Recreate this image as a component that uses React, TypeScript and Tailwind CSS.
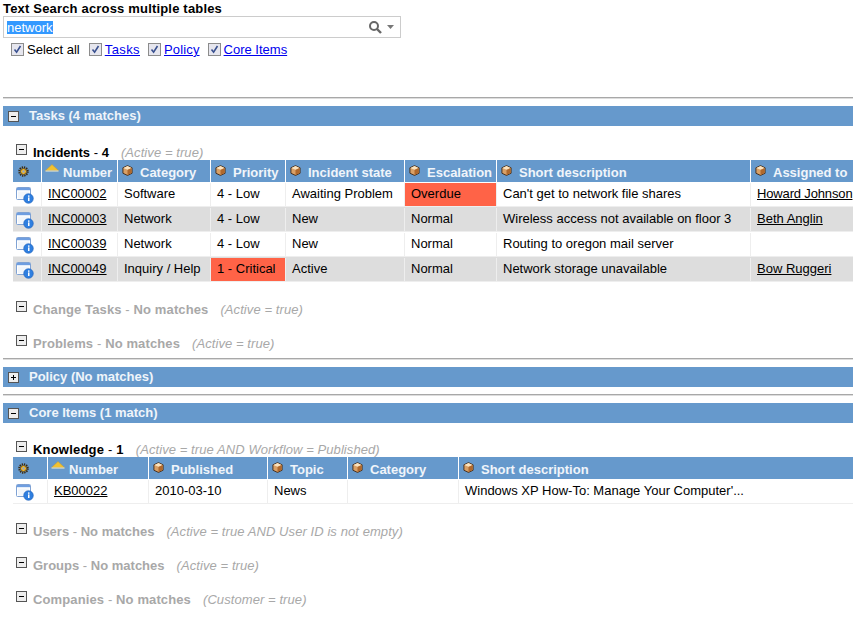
import React from "react";

const Cube = () => (
  <svg width="11" height="11" viewBox="0 0 12 12" className="absolute left-[4px] top-[5px]">
    <path d="M6 .7 11 3v6l-5 2.4L1 9V3z" fill="#d9a066" stroke="#3f2a18" strokeWidth="1" />
    <path d="M1.5 3.2 6 5.3l4.5-2.1L6 1.2z" fill="#fbe3bf" />
    <path d="M6 5.4V11l4.5-2.2V3.4z" fill="#b0682c" />
  </svg>
);
const Sort = () => (
  <svg width="14" height="8" viewBox="0 0 14 8" className="absolute left-[3px] top-[4px]">
    <path d="M7 .5 13.5 6.5H.5z" fill="#f2c230" stroke="#b89a4a" strokeWidth=".6" />
    <path d="M.5 7h13" stroke="#f5f0d0" strokeWidth="1" />
  </svg>
);
const Gear = () => (
  <svg width="11" height="11" viewBox="0 0 12 12" className="absolute left-[5px] top-[6px]">
    <circle cx="6" cy="6" r="4.6" fill="none" stroke="#3b2a10" strokeWidth="2.2" strokeDasharray="1.4 1" />
    <circle cx="6" cy="6" r="3.3" fill="#f0b429" stroke="#4a3510" strokeWidth=".8" />
    <circle cx="6" cy="6" r="1.3" fill="#8fa9cc" />
  </svg>
);
const Info = () => (
  <svg width="18" height="17" viewBox="0 0 18 17" className="block">
    <rect x=".5" y=".5" width="14" height="12" rx="1" fill="#fff" stroke="#7fa2d4" />
    <rect x="1" y="1" width="13" height="2.2" fill="#6f9ee0" />
    <rect x="2" y="4.5" width="11" height="7" fill="#f2f6fb" />
    <circle cx="12.5" cy="11.5" r="4.8" fill="#2f7fe0" stroke="#1f5fb8" strokeWidth=".6" />
    <rect x="12" y="8.4" width="1.5" height="1.4" fill="#fff" />
    <rect x="12" y="10.4" width="1.5" height="3.6" fill="#fff" />
  </svg>
);
const Toggle = ({ plus = false }: { plus?: boolean }) => (
  <span className="inline-flex items-center justify-center relative w-[11px] h-[11px] shrink-0 border border-[#555] bg-[#eeeeee]">
    <span className="w-[5px] h-px bg-black" />
    {plus && <span className="absolute w-px h-[5px] bg-black" />}
  </span>
);
const Check = () => (
  <span className="inline-flex items-center justify-center w-[13px] h-[13px] border border-[#8c8c8c] bg-[#e6e6ee] shrink-0">
    <svg width="9" height="9" viewBox="0 0 9 9"><path d="M1.5 4.5 3.6 7.2 7.5 1" fill="none" stroke="#39508f" strokeWidth="1.6" /></svg>
  </span>
);

const Bar = ({ title, plus = false, mt }: { title: string; plus?: boolean; mt: string }) => (
  <div className={`ml-[3px] h-5 bg-[#6699cc] flex items-center pl-[5px] gap-[10px] ${mt}`}>
    <Toggle plus={plus} />
    <span className="font-bold text-white/90 text-[13px]">{title}</span>
  </div>
);
const Rule = ({ mt }: { mt: string }) => <div className={`ml-[3px] h-[2px] bg-[#a8a8a8] border-b border-[#dddddd] ${mt}`} />;

const Group = ({ name, count, cond, className = "", track = "" }: { name: string; count: string; cond: string; className?: string; track?: string }) => {
  const none = count === "No matches";
  return (
    <div className={`ml-4 flex items-center h-[17px] text-[13px] ${className}`}>
      <span className="-translate-y-[2px] flex"><Toggle /></span>
      <span className={`ml-[6px] font-bold translate-y-px ${track} ${none ? "text-[#a8a8a8]" : "text-black"}`}>
        {name} <span className="font-normal">-</span> {count}
      </span>
      <span className="italic text-[#a8a8a8] ml-3 translate-y-px tracking-[0.08px]">{cond}</span>
    </div>
  );
};

type Cell = { t?: string; link?: boolean; red?: boolean; tight?: boolean };
const DataTable = ({ first, widths, heads, rows }: { first: number; widths: number[]; heads: string[]; rows: Cell[][] }) => (
  <div className="ml-[13px] overflow-hidden">
    <div className="flex h-[22px] bg-white">
      <div className="relative bg-[#6699cc] shrink-0 mr-px h-full" style={{ width: first - 1 }}><Gear /></div>
      {heads.map((h, i) => (
        <div key={h} className="relative bg-[#6699cc] shrink-0 mr-px h-full font-bold text-white/90 text-[13px] whitespace-nowrap leading-[26px]" style={{ width: widths[i] - 1 }}>
          {i === 0 ? <Sort /> : <Cube />}
          <span className={i === 0 ? "pl-[21px]" : "pl-[22px]"}>{h}</span>
        </div>
      ))}
    </div>
    {rows.map((r, i) => (
      <div key={i} className={`flex h-[25px] pt-px text-[13px] text-black ${i % 2 ? "bg-[#dddddd]" : "bg-white"} border-b border-[#eeeeee]`}>
        <div className="shrink-0 border-r border-[#eeeeee] pl-[3px] pt-[4px]" style={{ width: first }}><Info /></div>
        {r.map((c, j) => (
          <div key={j} className={`shrink-0 border-r border-[#eeeeee] pl-[6px] whitespace-nowrap leading-[21px] ${c.red ? "bg-[#ff6347]" : ""}`} style={{ width: widths[j] }}>
            {c.link ? <a className={`underline text-black ${c.tight ? "tracking-[-0.15px]" : ""}`} href="#">{c.t}</a> : c.t}
          </div>
        ))}
      </div>
    ))}
  </div>
);

const inc: Cell[][] = [
  [{ t: "INC00002", link: true }, { t: "Software" }, { t: "4 - Low" }, { t: "Awaiting Problem" }, { t: "Overdue", red: true }, { t: "Can't get to network file shares" }, { t: "Howard Johnson", link: true, tight: true }],
  [{ t: "INC00003", link: true }, { t: "Network" }, { t: "4 - Low" }, { t: "New" }, { t: "Normal" }, { t: "Wireless access not available on floor 3" }, { t: "Beth Anglin", link: true }],
  [{ t: "INC00039", link: true }, { t: "Network" }, { t: "4 - Low" }, { t: "New" }, { t: "Normal" }, { t: "Routing to oregon mail server" }, {}],
  [{ t: "INC00049", link: true }, { t: "Inquiry / Help" }, { t: "1 - Critical", red: true }, { t: "Active" }, { t: "Normal" }, { t: "Network storage unavailable" }, { t: "Bow Ruggeri", link: true }],
];

export default function App() {
  return (
    <div className="w-[853px] h-[617px] overflow-hidden bg-white text-black text-[13px] font-['Liberation_Sans',Arial,sans-serif]">
      <div className="ml-[3px] pt-px leading-[15px] font-bold tracking-[0.18px]">Text Search across multiple tables</div>
      <div className="ml-[3px] w-[398px] h-[22px] border border-[#cccccc] flex items-center pl-[3px] pr-[6px]">
        <span className="bg-[#3399ff] text-white leading-[13px]">network</span>
        <svg width="15" height="14" viewBox="0 0 15 14" className="ml-auto"><circle cx="6" cy="6" r="4" fill="none" stroke="#666" strokeWidth="2" /><path d="M9 9l4 4" stroke="#666" strokeWidth="2.4" /></svg>
        <svg width="7" height="4" viewBox="0 0 7 4" className="ml-[4px]"><path d="M0 0h7L3.5 4z" fill="#777" /></svg>
      </div>
      <div className="ml-[11px] mt-[4px] h-[15px] flex items-center">
        <Check /><span className="ml-[3px]">Select all</span>
        <span className="ml-[9px]"><Check /></span><a href="#" className="ml-[3px] underline text-[#0000ee] tracking-[0.4px]">Tasks</a>
        <span className="ml-2"><Check /></span><a href="#" className="ml-[3px] underline text-[#0000ee] tracking-[0.15px]">Policy</a>
        <span className="ml-2"><Check /></span><a href="#" className="ml-[3px] underline text-[#0000ee]">Core Items</a>
      </div>

      <Rule mt="mt-[40px]" />
      <Bar title="Tasks (4 matches)" mt="mt-[7px]" />
      <Group name="Incidents" count="4" cond="(Active = true)" className="mt-[17px]" />
      <DataTable first={29} widths={[76, 93, 75, 119, 92, 254, 110]} heads={["Number", "Category", "Priority", "Incident state", "Escalation", "Short description", "Assigned to"]} rows={inc} />
      <Group name="Change Tasks" count="No matches" cond="(Active = true)" track="tracking-[0.12px]" className="mt-[18px]" />
      <Group name="Problems" count="No matches" cond="(Active = true)" track="tracking-[0.12px]" className="mt-[17px]" />
      <Rule mt="mt-[7px]" />
      <Bar title="Policy (No matches)" plus mt="mt-[7px]" />
      <Rule mt="mt-[7px]" />
      <Bar title="Core Items (1 match)" mt="mt-[7px]" />
      <Group name="Knowledge" count="1" cond="(Active = true AND Workflow = Published)" track="tracking-[0.2px]" className="mt-[17px]" />
      <DataTable
        first={35}
        widths={[101, 119, 80, 111, 400]}
        heads={["Number", "Published", "Topic", "Category", "Short description"]}
        rows={[[{ t: "KB00022", link: true }, { t: "2010-03-10" }, { t: "News" }, {}, { t: "Windows XP How-To: Manage Your Computer'..." }]]}
      />
      <Group name="Users" count="No matches" cond="(Active = true AND User ID is not empty)" className="mt-[18px]" />
      <Group name="Groups" count="No matches" cond="(Active = true)" className="mt-[17px]" />
      <Group name="Companies" count="No matches" cond="(Customer = true)" track="tracking-[0.12px]" className="mt-[17px]" />
    </div>
  );
}
